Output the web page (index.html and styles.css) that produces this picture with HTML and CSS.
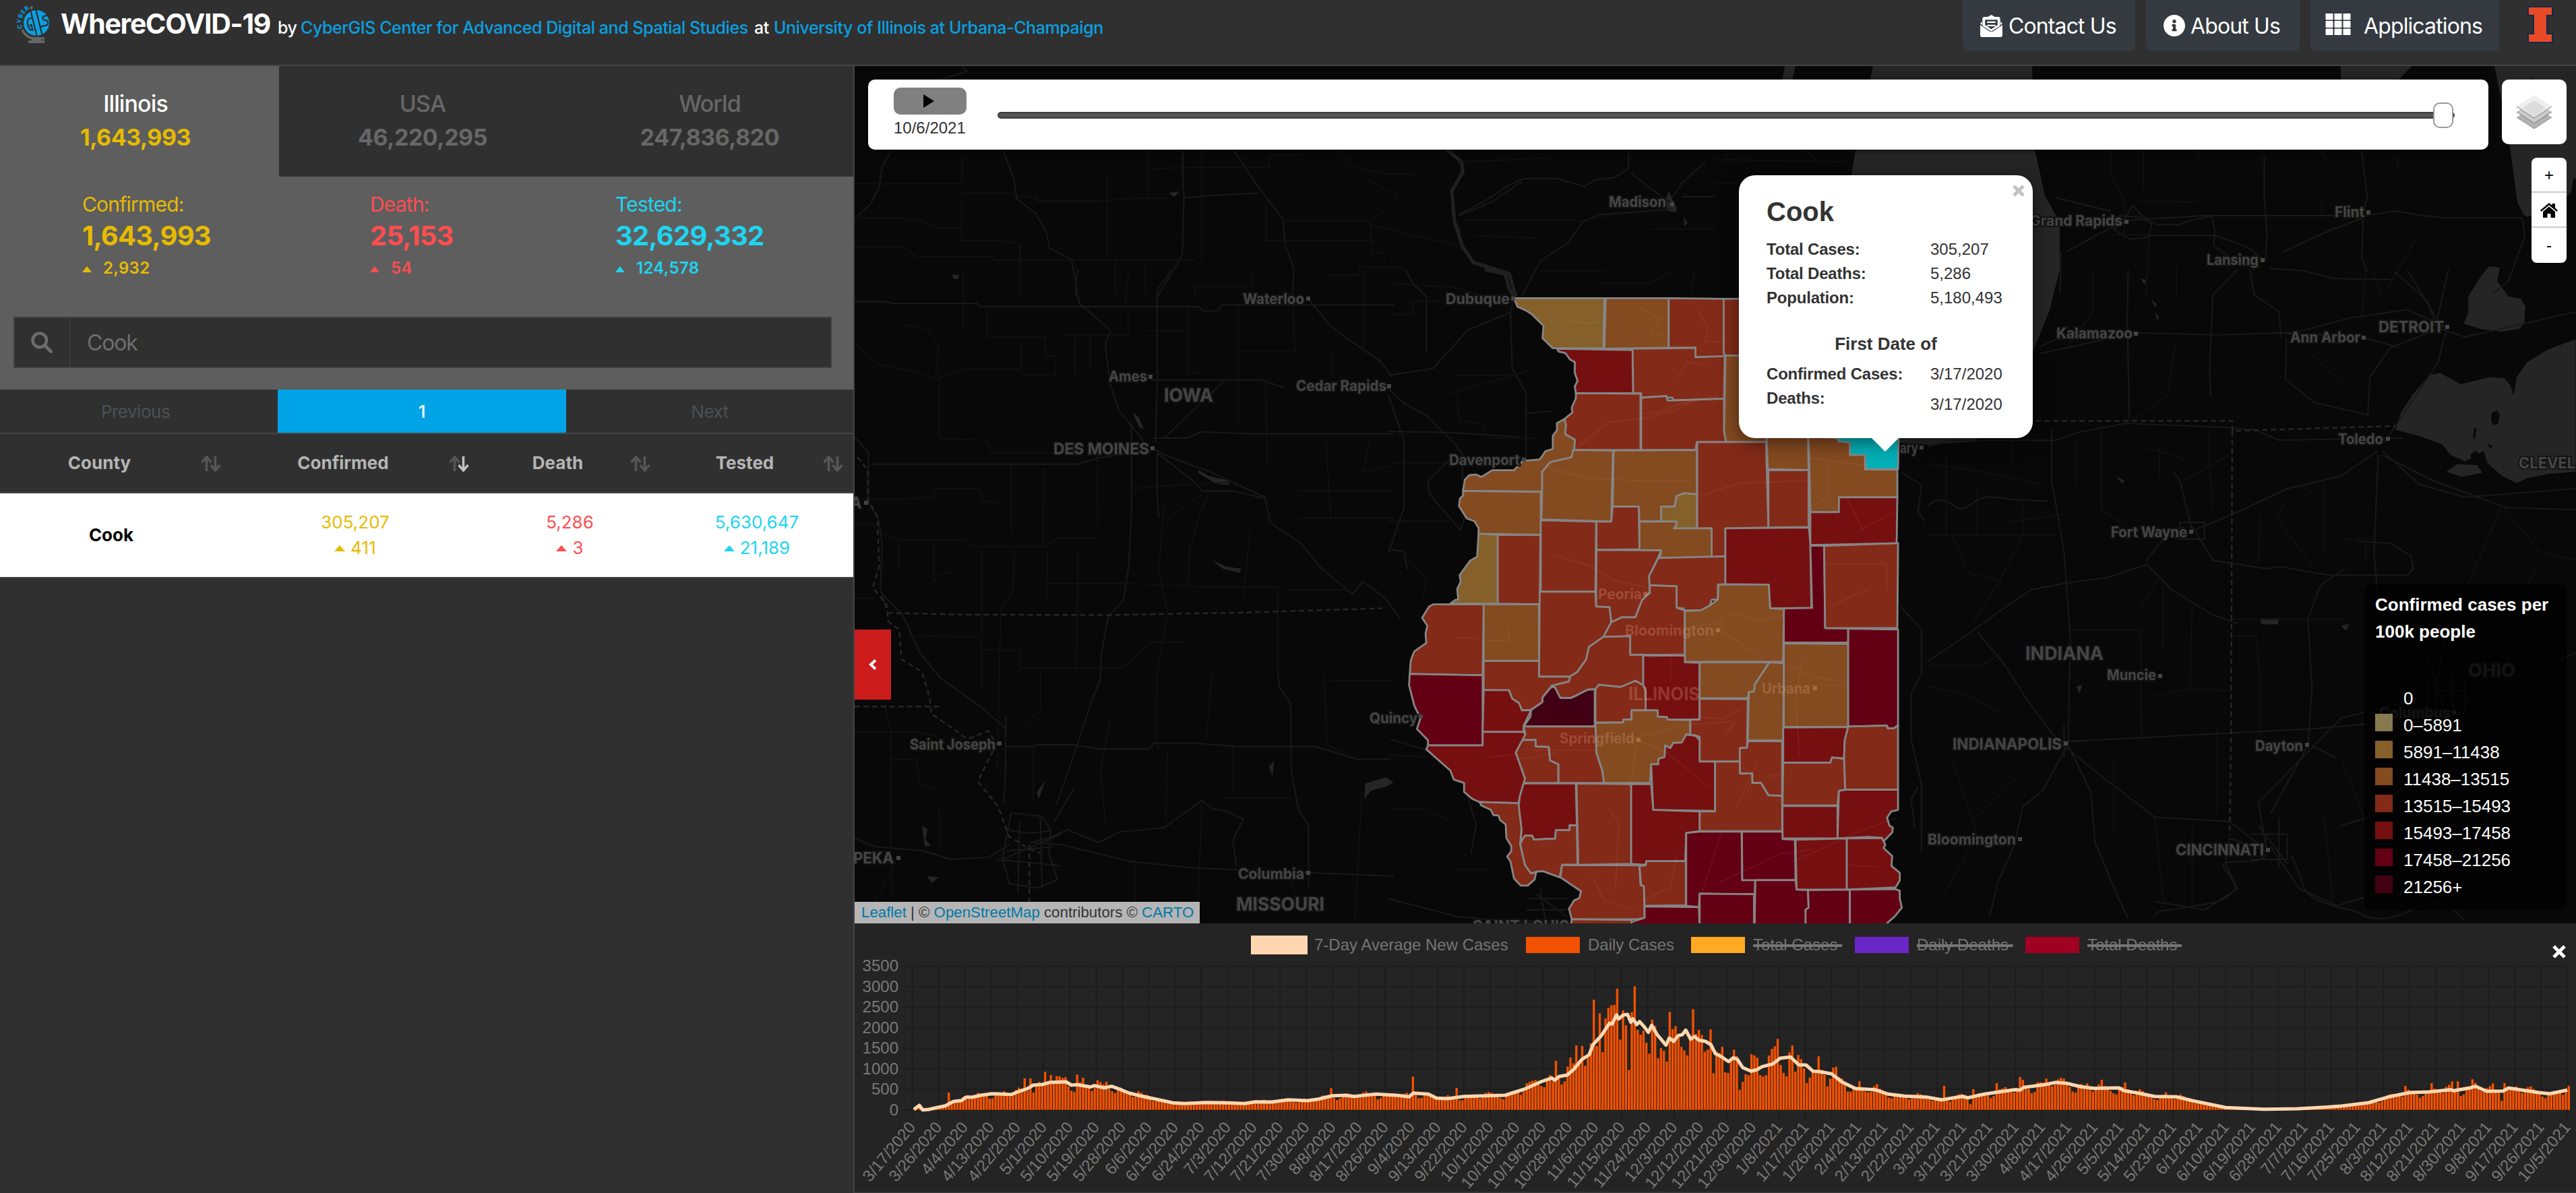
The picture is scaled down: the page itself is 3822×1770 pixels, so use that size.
FILE: index.html
```html
<!DOCTYPE html>
<html lang="en">
<head>
<meta charset="utf-8">
<title>WhereCOVID-19</title>
<link rel="stylesheet" href="styles.css">
</head>
<body>
<header class="topbar">
  <svg class="logo" viewBox="0 0 60 64" width="60" height="64">
    <circle cx="34" cy="34" r="19" fill="#0aa0e2"/>
    <g fill="none" stroke="#303030" stroke-width="2.2" transform="rotate(-14 34 34)">
      <path d="M30 14v40M38 14v40M30 25h-5c-3 1-4 5-4 9s1 8 4 9h1v-8h-3M53 27h-6c-3 0-3 5 0 6 5 1 5 8 0 8h-9"/>
    </g>
    <path id="arc" d="M13.5 42A22.5 22.5 0 0 1 26 12.500" fill="none"/>
    <text class="logo-text"><textPath href="#arc">CYBER</textPath></text>
    <circle cx="26.500" cy="11.500" r="2.200" fill="#666"/>
    <path d="M13 44c4 9 12 14 23 13h10" fill="none" stroke="#666" stroke-width="3.500"/>
    <path d="M27 55h14v5h5v4c-8 3-16 3-24 0v-4h5z" fill="#666"/>
  </svg>
  <h1 class="brand">WhereCOVID-19</h1>
  <p class="byline"><span class="by">by</span><a class="l1">CyberGIS Center for Advanced Digital and Spatial Studies</a><span class="at">at</span><a class="l2">University of Illinois at Urbana-Champaign</a></p>
  <nav class="nav">
    <a class="btn contact"><svg viewBox="0 0 32 32" width="33" height="33" fill="#fff"><path d="M0 14.500 13 23.500c2 1.300 4 1.300 6 0L32 14.500V29a3 3 0 0 1-3 3H3a3 3 0 0 1-3-3z"/><path d="M0 12.500 3.500 9V5.500Q3.500 3 6 3h5l5-3 5 3h5q2.500 0 2.500 2.500V9L32 12.500 29 14.700V7q0-1-1-1H4Q3 6 3 7v7.700z"/><path d="M3.500 4h25v12L16 24 3.500 16z"/><path d="M7 7h18v7.500l-9 6-9-6z" fill="#343a40"/><path d="M10 9.500h12v2.200H10zM10 14.200h12v2.200H10z"/></svg><span>Contact Us</span></a>
    <a class="btn about"><svg viewBox="8 8 496 496" width="32" height="32" fill="#fff"><path d="M256 8C119.043 8 8 119.083 8 256c0 136.997 111.043 248 248 248s248-111.003 248-248C504 119.083 392.957 8 256 8zm0 110c23.196 0 42 18.804 42 42s-18.804 42-42 42-42-18.804-42-42 18.804-42 42-42zm56 254c0 6.627-5.373 12-12 12h-88c-6.627 0-12-5.373-12-12v-24c0-6.627 5.373-12 12-12h12v-64h-12c-6.627 0-12-5.373-12-12v-24c0-6.627 5.373-12 12-12h64c6.627 0 12 5.373 12 12v100h12c6.627 0 12 5.373 12 12v24z"/></svg><span>About Us</span></a>
    <a class="btn apps"><svg viewBox="0 0 38 32" width="38" height="32" fill="#fff"><path d="M1 0h10v9H1zM14 0h10v9H14zM27 0h10v9H27zM1 11.500h10v9H1zM14 11.500h10v9H14zM27 11.500h10v9H27zM1 23h10v9H1zM14 23h10v9H14zM27 23h10v9H27z" stroke="#fff" stroke-linejoin="round"/></svg><span>Applications</span></a>
    <svg class="block-i" viewBox="0 0 40 57" width="40" height="57"><path d="M2 2h36v13h-8v27h8v13H2V42h8V15H2z" fill="#e84a27" stroke="#13294b" stroke-width="2"/></svg>
  </nav>
</header>
<main class="layout">
  <aside class="sidebar">
    <div class="tabs">
      <div class="tab active"><b>Illinois</b><strong>1,643,993</strong></div>
      <div class="tab"><b>USA</b><strong>46,220,295</strong></div>
      <div class="tab"><b>World</b><strong>247,836,820</strong></div>
    </div>
    <div class="panel">
      <div class="stats">
        <div class="stat yellow"><span>Confirmed:</span><strong>1,643,993</strong><em><i></i>2,932</em></div>
        <div class="stat red"><span>Death:</span><strong>25,153</strong><em><i></i>54</em></div>
        <div class="stat cyan"><span>Tested:</span><strong>32,629,332</strong><em><i></i>124,578</em></div>
      </div>
      <div class="search">
        <span class="search-icon"><svg viewBox="0 0 32 32" width="32" height="32" fill="none" stroke="#6c6c6c" stroke-linecap="round"><circle cx="12.800" cy="12.800" r="10.300" stroke-width="4.600"/><path d="M21 21l8.500 8.500" stroke-width="5"/></svg></span>
        <span class="search-text">Cook</span>
      </div>
    </div>
    <div class="pager"><span>Previous</span><span class="current">1</span><span>Next</span></div>
    <div class="row head">
      <div class="cell"><b>County</b><svg class="sort" viewBox="0 0 30 24"><path d="M8.500 23V3M1.500 10l7-8 7 8"/><path d="M21.500 1v20M14.500 14l7 8 7-8"/></svg></div>
      <div class="cell"><b>Confirmed</b><svg class="sort" viewBox="0 0 30 24"><path d="M8.500 23V3M1.500 10l7-8 7 8"/><path class="on" d="M21.500 1v20M14.500 14l7 8 7-8"/></svg></div>
      <div class="cell"><b>Death</b><svg class="sort" viewBox="0 0 30 24"><path d="M8.500 23V3M1.500 10l7-8 7 8"/><path d="M21.500 1v20M14.500 14l7 8 7-8"/></svg></div>
      <div class="cell"><b>Tested</b><svg class="sort" viewBox="0 0 30 24"><path d="M8.500 23V3M1.500 10l7-8 7 8"/><path d="M21.500 1v20M14.500 14l7 8 7-8"/></svg></div>
    </div>
    <div class="row body">
      <div class="cell"><b>Cook</b></div>
      <div class="cell yellow"><span>305,207</span><em><i></i>411</em></div>
      <div class="cell red"><span>5,286</span><em><i></i>3</em></div>
      <div class="cell cyan"><span>5,630,647</span><em><i></i>21,189</em></div>
    </div>
  </aside>
  <section class="content">
    <div class="map">
      <svg class="basemap" viewBox="1268 98 2554 1272" width="2554" height="1272">
        <g class="water">
          <path d="M2779 98H3015L3019 222 3034 290 3056 330V400L3041 460 3019 515 2980 600 2930 655 2860 660 2790 655 2747 400V260L2753 222z"/>
          <path d="M2648 98h16l-6 24h-14zM3473 98h106l-24 24h-82z"/>
          <path d="M3701 98 3722 200 3727 240 3735 300 3744 318 3750 322 3800 300 3815 285 3818 265H3822V98z"/>
          <path d="M3681 410 3693 395 3709 397 3705 417 3722 440 3740 443 3747 455 3745 480 3738 488 3710 492 3680 488 3655 480 3662 465V440z"/>
          <path transform="translate(2860 400) scale(.6133 .625)" d="M1215 250l25-5 50 27 70-17 35 3 15 17 8 25 7-45 25-35 50-30 68-25v315l-68 5-50 10-25 12-35-17-35-30-10-30-25 15-20 10-35-15-20-25-55-20-58-15 13-40 30-45zM1255 480l25-18 50 2 12 18-50 10z"/>
          <path transform="translate(1268 400) scale(.5102 .625)" d="M1000 475l30 15 55 10 5 12-40-4-50-25zM1040 690l40 15 45 5-5 10-50-10zM808 340l18 10 15 28-12-2zM282 12h20v10h-14zM1485 1220l60-15 22 12-20 10-45 10-20 20zM196 1320l16 8-6 25 16 14-18 2zM210 1440l35 2-20 14zM1205 1180l15-15-5 38zM530 1240l25-28-20 45z"/>
          <path transform="translate(2860 400) scale(.6133 .625)" d="M805 828h45l-3 14h-40zM1000 845l20-4-8 16zM515 22l14 2-4 12zM455 490l22 12-6 6zM360 990l15-5-8 22zM540 70l14 12-4 8zM548 100l12 14-4 6z"/>
          <path d="M2476 283l6 14 6 12-2 6-12-2-4-12zM2498 322l6 8-5 6zM1734 286l16-2-8 8z"/>
        </g>
        <path class="island" transform="translate(2860 400) scale(.6133 .625)" d="M1364 340l14-6 6 10-4 22-12 4-5-14zM1322 378l6-4-4 30-5-6zM1354 414l12 4-4 8zM1312 440l14-10 8 8-16 12z"/>
        <g class="roads" transform="translate(1268 0) scale(.8144 .3333)">
          <path class="r1" d="M160 350l45-32-10-24M70 660l-20 80-5 90-15 75-25 60M270 665l20 130 5 90 35 65 20 90 5 65 40 50 8 100v65M690 665l40 150 50 160 5 120 15 100-2 130M598 665v120l2 90-3 260-45 185M600 880l50-10 85-10M1080 665l25 65 5 40-20 70-2 110 15 80 2 70 20 60 65 50 12 100"/>
          <path class="r1 thick" d="M1078 665l28 55 2 45-20 85 5 140 15 110 20 70 65 50 12 100"/>
          <path class="r1" d="M1100 955l45-55 50-80 25-25h60l50 35 20-30 35-10 25-40v-75M1100 960l60-60 55-90M1490 930l-100 20-35 5-30 35-25 90-50 80-35 160M1490 880l15-60 45-100M1568 875h-60M1490 910l-45-80-30-60"/>
          <path class="r0" d="M0 818h195l2-120M0 970h90v12h35l25 32h45V860h100v15h35v20h120l60-12h60M195 860v210h70l35 14v70M0 1100h90l22 42h140v15h370M460 780v375M535 665v210M540 752l50-6h165V690h60M632 665v500M750 890v175M780 983h160v170M745 1070h200v55h20v38M880 665l30 80 60 30h50M940 1000l80 50 80 40M930 790l60 90-50 110M1105 720l90-8 65-10M1110 980h210M1320 985l60-30M1450 1020h118M1130 1050l120 10M1250 1205h118M865 1225h55v-37h80M302 1085v230M475 1160v155M530 1160v155"/>
        </g>
        <g class="roads" transform="translate(2545 0) scale(.8144 .3333)">
          <path class="r1" d="M745 990l-20 30 30 45 35-10 5-60-25-30-35-5M745 980l15-65 20 50 25 35h40l30-25 30-12 5 60-2 70 35 60 25 30 25 5M640 1120l60-80 50-60 140-20h290l60-20 50 20 40 10h140M1180 960l-2 190 10 60M1180 940l8-60-10-200-25-40M1000 700v190l5 150-3 120M1000 1160l-30-60-60-52H790M1010 1195l60 10 60 35 100 5M1035 1120l80-90 65-60M630 1120l-2 190M620 880l100 60M1470 970l5 80-30 200-30 60"/>
          <path class="r0" d="M780 665v180M720 665v110l25 120v180M880 665v60M995 665v90M1115 720l-15-55M770 895l110 5M715 1045h75M0 710l240 10M20 665v60M160 665l30 60M790 1060l-5 250M840 1180v140M1105 880v70M1200 1220l15 100M1240 700l5 50M1330 665v-60M1480 400l10-60M0 815h45M1280 1050l-60 250"/>
        </g>
        <g class="roads" transform="translate(1268 400) scale(.5102 .625)">
          <path class="r1" d="M0 76h90l20 4h245l12 8h635l10 10h42l14-14h500M650 0l-8 30 12 50 70 50 20 15-15 30 5 40 10 60 25 60 60 60 30 40M880 260V50l40-50M880 260l-5 150M860 262h320l70 18M868 425l35 15 130 40 160 60 15 60 90 50 60 60 90 60 30-30 65 40 45 50M868 400h100l40-15 150 5h410M805 365v210l-8 130-15 80-45 40-20 90-2 55-28 60-40 100-60 140M880 430v110l5 50M0 398l40 35v120l30 40 10 60-5 100 15 50M48 462h600l60-15 90-10M880 435l110 70 20 20h90l90 18M1320 70l60 60 45 30 100 55 40 40M900 400l180-140M1230 950l5 40 33 40 2 160 20 90 30 40v150M440 1132h75l20-4h100l80 10h140l15-14h120l120 8h230l120 30h100M0 1350l60 20 140 10 80 20 110-5 60-30M510 1360l90 5 200 40 180 15 588 20M440 1060l-2 150-5 60M80 770l60 50 50 90 60 60 60 35 60 35 70 50M580 1310l60-80"/>
          <path class="r1" d="M455 1290l90 8 25 30-5 60 25 60-60 20-80-10-20-60zM440 1330l70 8 60-6M440 1380l140-10M480 1310l-5 170M540 1300l5 170M410 1400l190 15M600 1340l-170 60M510 1360l50-10 60-20 90 30 60-25 130-10 60-35 50-30 30 20 40 5 50 20-30 50 10 60"/>
          <path class="r0" d="M0 175l70 50 90 15 75 20M235 260l10-80-35-40-75-10M235 260l90-25h160l5 15h95V205h-30v-45h-170V85M315 0v142M245 240v160M485 165v74M600 155h195V90M640 160v90M685 160v80M797 0l-12 100M850 145h120M970 80v165h50M1115 80v115h165l-5-110M1115 195v170M1155 0v40H990v30M250 402l130 3 20 30h200M0 545h140l90-5 3-20h130l10 30 60 5M455 462v160M550 470l-2 190M705 400l2 210M805 520l120-8 190-8M1195 260l5 200M1390 190v65M1370 400l15 190M1480 0v200M0 605h60M70 620l60 22h190l20 15h220l30-20h110M128 640v75M285 720h-30l-25 20V640M370 665v330M465 665l-5 100-35 40-10 380M560 665v115M550 745h250l200 8h240M650 665l-5 280M900 550l-15 160 15 70 10 30-30 150-5 120 8 60M975 650l-5 100M1030 530l-30 60-20 60M1150 620l-20 160M1230 760v190M1260 760h180M1293 590h275M1290 525h280M0 780h60M150 870l210 2 10 30 110 3M0 1098h180l60 10M90 850v200l15 40v280l5 120M180 1165l10 60 60 10M105 1163h75M480 905v40h300l80-60h100M540 945v100l-60 50M640 945h60M1040 955l-20 180M1365 960l10 170 60 20M1380 975h190M745 1060l-30 130 15 130M910 1140l-5 170M1100 1130v110M1010 1260l-10 220-5 60M1060 1255h230M815 1400v150M1475 1240l-20 310M245 1270l5 110M520 1130v130M120 1400l-20 40-60 90M1250 1430l60 90M900 600l130-80M1500 390l-20 90 88-15"/>
          <path class="border" d="M0 1037h255M95 815l40 1 200 3 400 1 400-6 400-10M508 1365v190"/>
          <path class="border" d="M8 445l30 30v70l28 40 5 120-18 50 40 40 5 40 32 20 6 70 60 30 22 60 5 40 55 30 50 30 60-20 25 30-55 90 60 60 30 70 60 30 30 10"/>
        </g>
        <g class="roads" transform="translate(2860 400) scale(.6133 .625)">
          <path class="r1" d="M270 200l230-50 200 5 170-5 180 10 90 25M270 185l40-20 180-10M485 0l-2 120 5 230M750 0l-60 60-8 180 3 60M780 0l10 60 60 40 5 60M868 160l-2 100M865 260l70 55 130 30M1065 345l5-90 50-70 130-50M1240 140l60 20 268-60M1255 140l-20 80-130 190M1250 135l-90-40-140 20-150 40M1230 130l30-130M1240 130l-80-130M1230 135l-20-60-80-70M0 420l60-15h250l60-20 110-20 250 10 60 5 60 25 300-5M1090 440l-10 230 10 120M1090 430l-90 60-130 30-130 60-100 40M1100 430l90 80 110 30 268-20M1100 440l120 60 180 65 168 5M640 610l50 80 130 20 30-5 120 20h190l15-15-5-30-50-30-80-5M640 620l-30-120-15-20M300 380v120l30 170 15 200-5 260M530 700l-90 30-110 15-80 15-60 40-70 50-120 80M530 690l40-50 50-30M530 700l60 60 100 60 60 20M120 860l60 70 60 90 60 80 30 30M340 1125l-60 110-50 40-20 90-40 90-20 80M340 1130l55 110 10 120 60 140 20 40M340 1120l200-10 190-10 200-10 240-20M330 1130l100 80 120 90 180 10 80 60M820 1375l-20-110 90-90 110-110 240-60M830 1370l70 100 90 40 100-30 80 40M820 1380l-90-30-10 60 30 60-80 50-120-20M920 1130l10-140-10-160 30-80 60-40M920 1130l-90 160M930 1130l60 30M1250 1060l80-60 238-90M1250 1050l-60-200-130-70M1260 1060l60 160 60 180 80 80M1250 1060l-90 150-60 80-100 30M1230 1000l20-120 50-80"/>
          <path class="r1" d="M1210 980h90v70h-90zM1195 1050h120M1230 960v130M1270 950v150M1225 1000h80M780 1340h90v60h-90M800 1320l70 90M850 1300v120M300 1120h70M330 1080v80M610 600h60v40h-60z"/>
          <path class="r0" d="M0 460l130 20 150 30M0 630h310M45 440v200M120 515v120M230 545v90l-60 110-60 90M190 600l150-20M420 380v190l60 40M360 400v110M560 420l2 80M680 380v60l10 130M735 1000l-100-5-100 20M0 990l100 20 70 40M0 940h130l50-30M345 855h170l3 270M570 750l-2 160M640 800l-5 200M560 730l-50 80M735 870h60l10 110v130M805 580l-5 120M960 510v160M865 550l-20 40 90 120M910 540l20-15M735 830h270M1390 560l-80 180-20 60M1390 560l90 110 88 20M1480 700l-30 50M60 630l40 90 80 20M200 360l5 100M400 0v100l-60 80M600 170l-20 130-90 60M1060 0l-10 120M930 200l70 70M1000 640h60v50M60 1160l60 180-90 160M220 1200l-120 120M450 1160v180M550 1300l20 200M640 1320v200M700 1090v200M1000 1160l60 150M1130 1180l60 180M960 1300l20 200M620 500l110-60M520 420l100 30"/>
          <path class="border" d="M240 359h497v24l395-12M737 383l-3 720-3 240"/>
          <path class="r1" d="M0 560c60-40 60 30 100 0s60-20 100-15l90 5M820 1385c-10 40-130 0-100 40s30 40 10 60-60 20-110 30-60 0-70 20M880 1390c30 60 20 90 70 110s90 20 100 30 60 20 110-5 60-20 80-20 40 20 60 40"/>
        </g>
        <g class="roads" transform="translate(2060 400) scale(.5102 .3333)">
          <path class="r1 thick" d="M280 0l60 20 10 60 15 45"/>
          <path class="r1" d="M0 470l130-30 100-170 125-80 10-60M355 190l5 250 40 110v300M0 530l50 70 60 50 80 120 25 50v120M0 720l180 5 200 20M0 560l45 200v300l-45 200M400 640l80-10M120 1000l90 160 20-100M120 1000l-5-60 80-120M0 1245l45 10 10 80M50 0l20 60 40 60v250M1490 900l60 60-10 120 20 40M1490 1500l60 100v200l-30 90v200l30 200v300M1540 2300l-20 60 10 120M0 2800l200 80 300 40 30 100M240 2600l15-130-40-200-80-120-130-60M410 2800h110M430 2780l90 100M400 2850h120M440 2750l20 180M380 2900h140"/>
          <path class="r0" d="M0 60l200 20 80 40M0 200h70v-60h90M180 550l230-100-60 20h-160M200 560l5 110 75 20v60h150M0 860h190M0 1120h180M40 1250l70 130-10 100M0 2160l110 10M0 2400h100l90 60M200 2670h100M450 200l60 10 80-40M620 60h140l60-50M890 0l-10 100"/>
        </g>
        <g id="counties" transform="translate(2060 400) scale(.5102 .3333)"></g>
        <g class="cover" transform="translate(2060 400) scale(.5102 .3333)">
          <path d="M530 230l60 10 30-10M730 170l60 50-30 60 50 20M900 180l30 80-10 60h60M840 480l30-70 60 20M550 790l90-110 120-20 80-60 120-40M740 640l90-10 60-50M460 880l120 50 160 10h140M900 1010l120-60 200-10M1280 860v150M1230 840l150 30 90-30M1380 1160l-50-150M1240 1000l60 70M1370 1160l100-80M480 1270l110 50 60 60 110 40M930 1590l60-60 90 30 70-20M870 1590l100-20M940 1560l40 60 90 90M760 1730l110-30M890 1990l80 10 50-40M1160 1760l80 50 90 30M1205 1730l-20 180 10 260M1210 1850h120M820 1700v140M720 2090l90 60 120 150M720 2100l-10 160-20 60M700 2090l160-60 140-20M980 2070l30-60M490 2150l-60 20-60 10M420 2140h180M1060 2270l-20 70M1100 2260l50-20M1170 2640l200-140 110-60M960 2730l180-130 100-20M970 2500l-60 280M1010 2400l60-200M640 2400l30 60-10 300M840 2600l-20 150-80 60M590 2700l40 110 90 40M1340 2650l80 10M1280 1500l120-80M1270 1310h180v120M200 1640h60M350 1590v60h-60M280 2170l90-10"/>
        </g>
        <g id="places"></g>
      </svg>
      <div class="timeline">
        <div class="play-col"><button class="play"><svg viewBox="0 0 16 20" width="16" height="20"><path d="M0 0l16 10L0 20z"/></svg></button><span>10/6/2021</span></div>
        <div class="track"><div class="thumb"></div></div>
      </div>
      <div class="layers"><svg viewBox="0 0 52 50" width="52" height="50"><path d="M26 16l26 17-26 17L0 33z" fill="#b3b3b3"/><path d="M0 33l26 17 26-17" fill="none" stroke="#8a8a8a"/><path d="M26 8l26 17-26 17L0 25z" fill="#c9c9c9"/><path d="M0 25l26 17 26-17" fill="none" stroke="#777"/><path d="M26 0l26 17-26 17L0 17z" fill="#efefef"/><path d="M26 8l17 11-17 14L9 19z" fill="#dcdcdc"/><path d="M0 17l26 17 26-17" fill="none" stroke="#777"/></svg></div>
      <div class="zoom"><span>+</span><span><svg viewBox="0 0 26 22" width="26" height="22"><path d="M0 11 13 0l4.500 3.800V1H22v6.500L26 11l-1.500 2L13 3.500 1.500 13z"/><path d="M13 5.500 22 13v9h-6.500v-6h-5v6H4v-9z"/></svg></span><span>-</span></div>
      <div class="popup">
        <svg class="popup-x" viewBox="0 0 20 20" width="20" height="20"><path d="M3 3l14 14M17 3L3 17" stroke="#c3c3c3" stroke-width="5"/></svg>
        <h2>Cook</h2>
        <dl><dt>Total Cases:</dt><dd>305,207</dd><dt>Total Deaths:</dt><dd>5,286</dd><dt>Population:</dt><dd>5,180,493</dd></dl>
        <h3>First Date of</h3>
        <dl><dt>Confirmed Cases:</dt><dd>3/17/2020</dd><dt>Deaths:</dt><dd class="low">3/17/2020</dd></dl>
      </div>
      <div class="legend">
        <h4>Confirmed cases per 100k people</h4>
        <ul>
          <li><i></i>0</li>
          <li><i class="c0"></i>0–5891</li>
          <li><i class="c1"></i>5891–11438</li>
          <li><i class="c2"></i>11438–13515</li>
          <li><i class="c3"></i>13515–15493</li>
          <li><i class="c4"></i>15493–17458</li>
          <li><i class="c5"></i>17458–21256</li>
          <li><i class="c6"></i>21256+</li>
        </ul>
      </div>
      <div class="collapse"><svg viewBox="0 0 12 18" width="12" height="18"><path d="M10 2.500L3 9l7 6.500" fill="none" stroke="#fff" stroke-width="4"/></svg></div>
      <div class="attribution"><a>Leaflet</a> | © <a>OpenStreetMap</a> contributors © <a>CARTO</a></div>
    </div>
    <div class="chart">
      <div class="keys">
        <span class="key avg"><i></i>7-Day Average New Cases</span>
        <span class="key daily"><i></i>Daily Cases</span>
        <span class="key total"><i></i><s>Total Cases&nbsp;</s></span>
        <span class="key deaths"><i></i><s>Daily Deaths&nbsp;</s></span>
        <span class="key tdeaths"><i></i><s>Total Deaths&nbsp;</s></span>
      </div>
      <svg class="chart-x" viewBox="0 0 22 22" width="22" height="22"><path d="M3 3l16 16M19 3L3 19" stroke="#fff" stroke-width="5"/></svg>
      <svg id="plot" viewBox="1268 1370 2554 400" width="2554" height="400"></svg>
    </div>
  </section>
</main>
<script src="app.js"></script>
</body>
</html>
```
FILE: styles.css
```css
* { box-sizing: border-box; margin: 0; padding: 0; }
body { width: 3822px; height: 1770px; overflow: hidden; background: #303030; color: #fff; font-family: Inter, "Liberation Sans", sans-serif; display: flex; flex-direction: column; }
i, em { font-style: normal; }
.yellow { color: #e6bb00; }
.red { color: #ff4d50; }
.cyan { color: #1ed5f0; }

.topbar { height: 98px; border-bottom: 2px solid #444; display: flex; align-items: flex-start; padding-left: 20px; }
.logo { flex: none; }
.logo-text { font-size: 9px; font-weight: 700; fill: #0aa0e2; letter-spacing: .6px; }
.brand { font-size: 41px; font-weight: 700; line-height: 70px; margin-left: 10px; width: 322px; white-space: nowrap; letter-spacing: -1.3px; }
.byline { display: flex; font-size: 25px; font-weight: 500; line-height: 82px; white-space: nowrap; letter-spacing: -.42px; }
.byline a { color: #0aa0e2; }
.by { width: 34px; }
.l1 { width: 673px; }
.at { width: 29px; }
.nav { margin-left: auto; display: flex; gap: 16px; padding-right: 33px; }
.btn { height: 76px; background: #343a40; border-radius: 0 0 8px 8px; display: flex; align-items: flex-start; font-size: 32px; line-height: 77px; letter-spacing: -.88px; white-space: nowrap; }
.btn svg { margin-top: 22px; flex: none; }
.btn.apps svg { margin-top: 20px; }
.contact { width: 256px; padding-left: 26px; gap: 9px; }
.about { width: 228px; padding-left: 26px; gap: 8px; }
.apps { width: 280px; padding-left: 22px; gap: 19px; }
.block-i { margin: 8px 0 0 25px; }

.layout { flex: 1; display: flex; min-height: 0; }
.sidebar { width: 1268px; flex: none; border-right: 2px solid #444; overflow: hidden; }
.tabs { display: flex; height: 164px; margin-left: -12px; }
.tab { width: 426px; flex: none; padding-top: 31px; display: flex; flex-direction: column; align-items: center; font-size: 34px; line-height: 50px; color: #676767; }
.tab b { font-weight: 500; letter-spacing: -.9px; }
.tab strong { letter-spacing: -.5px; }
.tab.active { background: #5e5e5e; color: #fff; }
.tab.active strong { color: #e6bb00; }
.panel { height: 316px; background: #5e5e5e; }
.stats { height: 208px; display: grid; grid-template-columns: 427px 364px 1fr; padding: 25px 0 0 122px; }
.stat { display: flex; flex-direction: column; }
.stat span { font-size: 30px; line-height: 32px; height: 38px; letter-spacing: -.8px; }
.stat strong { font-size: 40px; line-height: 50px; height: 53px; letter-spacing: -.8px; }
.stat em { font-size: 24px; font-weight: 600; line-height: 40px; display: flex; align-items: center; letter-spacing: .3px; }
.stat em i { border: 7.500px solid transparent; border-bottom: 9px solid; border-top: 0; margin-right: 17px; margin-top: 2px; }
.search { margin-left: 20px; width: 1214px; height: 76px; border: 2px solid #3f3f3f; background: #303030; display: flex; align-items: center; }
.search-icon { width: 82px; height: 72px; border-right: 1px solid #444; padding: 20px 0 0 24px; }
.search-text { font-size: 32px; letter-spacing: -1.2px; color: #6f6f6f; padding-left: 25px; }
.pager { height: 66px; border-bottom: 2px solid #444; display: flex; margin-left: -12px; font-size: 26px; letter-spacing: -.5px; line-height: 66px; color: #4b5056; text-align: center; }
.pager span { width: 426px; height: 64px; flex: none; }
.pager .current { background: #00a3e6; color: #fff; font-weight: 500; margin-left: -2px; width: 428px; }
.row { display: grid; grid-template-columns: 330px 368px 269px 286px; font-size: 26px; }
.head { height: 88px; border-bottom: 2px solid #444; line-height: 86px; color: #b5b5b5; }
.head .cell { position: relative; text-align: center; padding-right: 10px; }
.head .cell:first-child { padding-right: 35px; }
.sort { position: absolute; right: 2px; top: 32px; width: 30px; height: 24px; fill: none; stroke: #565656; stroke-width: 3.500; }
.sort .on { stroke: #c2c2c2; }
.body { width: 1266px; height: 126px; border-bottom: 2px solid #3f4244; background: #fff; line-height: 38px; }
.body .cell { display: flex; flex-direction: column; align-items: center; justify-content: center; padding-left: 26px; }
.body .cell:first-child { padding-left: 0; color: #000; }
.body em { display: flex; align-items: center; }
.body em i { border: 8px solid transparent; border-bottom: 9px solid; border-top: 0; margin-right: 8px; }

.content { flex: 1; display: flex; flex-direction: column; }
.map { position: relative; height: 1272px; background: #080808; overflow: hidden; font-family: "Liberation Sans", sans-serif; }
.basemap { display: block; }
.water { fill: #252525; }
.island { fill: #080808; }
.roads path, .cover path { fill: none; vector-effect: non-scaling-stroke; stroke-linejoin: round; }
.r0 { stroke: #121212; stroke-width: 1.500; }
.r1 { stroke: #191919; stroke-width: 2; }
.thick { stroke: #202020; stroke-width: 5; }
.border { stroke: #262626; stroke-width: 2.500; stroke-dasharray: 8 5; }
.cover path { stroke: rgba(255, 170, 150, .08); stroke-width: 2; }
#counties path { stroke: #868686; stroke-width: 2.800; vector-effect: non-scaling-stroke; stroke-linejoin: round; }
.place { font-family: Inter, sans-serif; font-weight: 700; fill: #454545; stroke: #121212; stroke-width: 4; paint-order: stroke; }
.place.over { fill: rgba(255, 190, 160, .24); stroke: none; }
.dot { fill: #454545; }
.dot.over { fill: rgba(255, 190, 160, .3); }

.timeline { position: absolute; left: 20px; top: 20px; width: 2404px; height: 104px; border-radius: 10px; background: #fff; box-shadow: 0 2px 10px rgba(0, 0, 0, .6); display: flex; padding: 12px 50px 0 38px; }
.play-col { width: 108px; margin-right: 46px; color: #333; font-size: 24px; line-height: 40px; }
.play { display: flex; align-items: center; justify-content: center; width: 108px; height: 40px; border: 0; border-radius: 10px; background: #808080; padding-right: 4px; }
.track { flex: 1; height: 10px; margin-top: 36px; border: 2px solid #3a3a3a; background: #555; border-radius: 5px; display: flex; justify-content: flex-end; align-items: center; }
.thumb { flex: none; width: 30px; height: 38px; border: 2px solid #999; border-radius: 10px; background: #fff; }
.layers { position: absolute; left: 2444px; top: 20px; width: 96px; height: 96px; border-radius: 10px; background: #fff; display: flex; align-items: center; justify-content: center; }
.zoom { position: absolute; left: 2488px; top: 136px; width: 52px; height: 156px; border-radius: 8px; background: #fff; color: #000; font-size: 24px; text-align: center; line-height: 52px; overflow: hidden; display: flex; flex-direction: column; }
.zoom span { height: 52px; border-bottom: 2px solid #ccc; }
.zoom span:last-child { border: 0; }
.zoom svg { display: block; margin: 15px auto 0; }
.popup { position: absolute; left: 1312px; top: 162px; width: 436px; height: 390px; border-radius: 24px; background: #fff; color: #333; box-shadow: 0 6px 28px rgba(0, 0, 0, .5); padding: 30px 0 0 41px; font-size: 24px; line-height: 36px; }
.popup::after { content: ""; position: absolute; left: 196px; top: 389px; border: 21px solid transparent; border-top: 21px solid #fff; border-bottom: 0; }
.popup-x { position: absolute; left: 405px; top: 13px; }
.popup h2 { font-size: 40px; line-height: 48px; height: 62px; }
.popup dl { display: grid; grid-template-columns: 243px 1fr; grid-auto-rows: 36px; }
.popup dt { font-weight: 700; letter-spacing: -.2px; }
.popup h3 { font-size: 26px; text-align: center; width: 354px; line-height: 36px; margin: 32px 0 9px; }
.popup .low { padding-top: 9px; }
.legend { position: absolute; left: 2240px; top: 768px; width: 300px; height: 484px; border-radius: 10px; background: rgba(0, 0, 0, .72); padding: 11px 0 0 16px; font-size: 26px; line-height: 40px; }
.legend h4 { font-size: 26px; margin-bottom: 59px; }
.legend li { display: flex; height: 40px; align-items: flex-start; }
.legend i { width: 26px; height: 26px; margin: 3px 16px 0 0; }
.c0 { background: #857a4e; } .c1 { background: #85602b; } .c2 { background: #844a20; } .c3 { background: #832a18; } .c4 { background: #760f10; } .c5 { background: #640013; } .c6 { background: #420015; }
.collapse { position: absolute; left: 0; top: 836px; width: 54px; height: 104px; background: #cc1c1c; display: flex; align-items: center; justify-content: center; }
.attribution { position: absolute; left: 0; bottom: 0; width: 512px; height: 32px; background: #b5b5b5; color: #333; font-size: 22.270px; line-height: 32px; padding-left: 10px; white-space: nowrap; }
.attribution a { color: #0078a8; }

.chart { position: relative; height: 400px; background: #242424; border-bottom: 2px solid #363636; font-family: "Liberation Sans", sans-serif; }
.keys { height: 63px; padding-left: 588px; display: flex; align-items: center; color: #757575; font-size: 24px; line-height: 64px; white-space: nowrap; }
.key { display: flex; align-items: center; }
.key i { width: 80px; height: 24px; margin-right: 12px; }
.avg { width: 408px; } .avg i { width: 84px; height: 28px; background: #fed7b0; margin-right: 10px; }
.daily { width: 245px; } .daily i { background: #f25100; }
.total { width: 243px; } .total i { background: #ffaa22; }
.deaths { width: 253px; } .deaths i { background: #6b26c8; }
.tdeaths i { background: #a00022; }
.key s { text-decoration-thickness: 4px; }
.chart-x { position: absolute; left: 2518px; top: 31px; }
#plot { position: absolute; left: 0; top: 0; }
.grid { stroke: #1d1d1d; stroke-width: 2; fill: none; }
.bars { stroke: #f25100; stroke-width: 3.400; fill: none; }
.avgline { stroke: #fed7b0; stroke-width: 5; fill: none; stroke-linejoin: round; }
.axis { fill: #787878; font-size: 24px; text-anchor: end; }
```
FILE: app.js
```js
const NS = 'http://www.w3.org/2000/svg';
function add(parent, tag, attrs, text) {
  const el = document.createElementNS(NS, tag);
  for (const k in attrs) el.setAttribute(k, attrs[k]);
  if (text) el.textContent = text;
  parent.appendChild(el);
  return el;
}

const FILL = { A: '#85602b', B: '#844a20', C: '#832a18', D: '#760f10', E: '#640013', F: '#420015', X: '#00b0b8' };
const counties = `
A 365,127 628,127 625,350 478,350 448,305 451,250 418,200 400,182 375,165
B 632,127 815,127 815,348 628,352
C 815,127 975,130 975,370 980,388 893,390 893,348 815,348
C 975,130 1060,130 1060,383 980,383 975,370
D 490,352 710,358 712,550 545,550 542,520 550,495 542,460 542,412 528,400 515,372 495,365
C 710,352 893,348 893,390 978,385 976,575 828,582 826,570 812,570 808,563 735,570 735,550 712,550
C 545,550 733,552 733,803 540,803 542,757 514,733 516,690 512,665 535,636 533,615 545,573
C 735,570 808,563 812,582 828,582 976,575 976,720 982,768 897,768 893,803 735,803
B 980,383 1100,383 1100,768 982,768 976,720
C 898,768 1098,768 1105,1148 980,1152 980,1275 940,1280 940,1152 898,1152
B 1100,740 1220,740 1222,892 1103,888
C 1105,893 1222,893 1222,1146 1105,1148
B 1222,740 1305,750 1310,765 1342,770 1342,825 1386,825 1386,890 1480,890 1480,1014 1310,1014 1310,1080 1227,1080
D 1310,1014 1480,1014 1478,1218 1227,1226 1227,1080 1310,1080
B 490,683 512,665 516,690 514,733 542,757 540,803 533,835 470,858 447,900 447,988 217,985 222,935 235,915 255,912 270,923 302,893 365,893 390,852 440,845 457,808 478,798 478,740 490,715
B 217,985 443,990 443,1180 262,1176 262,1150 250,1120 228,1108 205,1052 208,1020 217,1005
B 447,900 470,858 533,835 537,803 653,805 648,1122 445,1112 447,988
B 655,805 897,803 897,1000 860,995 838,1008 832,1055 793,1055 793,1120 730,1120 728,1055 652,1055
A 897,1000 860,995 838,1008 832,1055 793,1055 793,1120 838,1122 838,1135 830,1152 897,1152
C 652,1055 728,1055 730,1245 605,1248 605,1122 648,1122
B 730,1122 838,1122 838,1135 830,1152 940,1152 940,1282 790,1282 793,1250 730,1248
A 262,1176 318,1180 318,1487 180,1487 195,1470 203,1468 200,1420 210,1390 207,1360 238,1295 258,1278
C 318,1180 442,1182 440,1490 318,1487
C 443,1116 604,1122 602,1434 443,1434
C 605,1248 793,1250 782,1290 758,1365 760,1435 738,1470 718,1548 678,1548 648,1570 643,1503 604,1500
C 785,1284 980,1276 980,1400 958,1402 958,1468 940,1470 935,1495 908,1517 860,1517 858,1508 838,1505 838,1410 760,1405 758,1365
D 980,1152 1223,1148 1227,1226 1230,1506 1110,1508 1106,1402 980,1400
E 1227,1228 1267,1230 1270,1596 1337,1598 1337,1660 1150,1660 1150,1508 1232,1506
C 1267,1230 1482,1218 1480,1596 1270,1596
C 130,1490 277,1490 274,1806 62,1800 65,1740 75,1700 110,1662 108,1620 113,1585 98,1550 118,1500
B 277,1490 438,1490 438,1742 277,1742
C 440,1434 602,1434 604,1500 643,1503 648,1570 632,1630 583,1680 575,1735 550,1790 528,1812 438,1812
C 760,1405 838,1410 838,1505 862,1517 862,1715 703,1715 703,1632 625,1635 648,1570 678,1548 718,1548 738,1470 760,1440
B 862,1520 908,1517 935,1495 958,1468 960,1402 1106,1402 1110,1508 1150,1510 1148,1746 862,1746
C 625,1635 703,1632 703,1715 741,1715 741,1850 718,1830 705,1850 675,1858 612,1848 602,1868 580,1870 548,1895 530,1907 500,1907 485,1862 475,1852 525,1833 528,1812 550,1790 575,1735 583,1680
D 741,1718 862,1718 862,1748 905,1750 905,2003 812,2003 810,1992 783,1990 783,1962 748,1962 748,1875 741,1850
C 602,1868 612,1848 675,1858 718,1830 741,1850 748,1875 748,1962 707,1962 707,2003 683,2005 683,2016 602,2016
B 905,1748 1108,1748 1066,1845 1063,1878 1048,1880 1045,1908 905,1908
B 1108,1748 1150,1752 1148,2096 1045,2096 1048,1880 1063,1878 1066,1845
B 1150,1664 1337,1666 1337,2036 1150,2036
E 1337,1598 1482,1602 1482,2028 1470,2042 1452,2042 1450,2030 1337,2034
E 62,1800 274,1806 274,2118 115,2118 115,2095 83,2045 93,1997 75,1940 60,1850
C 277,1742 438,1742 438,1812 528,1812 525,1833 475,1852 448,1905 448,1925 415,1960 388,1962 380,1930 360,1910 352,1875 277,1872
D 277,1872 350,1872 360,1910 380,1930 388,1962 415,1962 393,2030 393,2058 274,2058
F 475,1855 485,1862 500,1907 530,1907 548,1895 580,1870 600,1868 600,2034 393,2034 413,1990 415,1960 448,1925 448,1905
C 393,2034 602,2034 605,2150 622,2230 627,2285 494,2285 494,2202 470,2185 466,2125 428,2123 428,2094 388,2094 398,2065
B 602,2018 683,2016 683,2003 707,2003 707,1962 783,1962 783,1990 810,1992 812,2003 878,2005 878,2068 866,2070 853,2105 828,2107 820,2130 805,2118 803,2170 785,2178 785,2202 764,2202 761,2285 627,2285 622,2230 605,2150
C 388,2094 428,2094 428,2123 466,2125 470,2185 494,2202 494,2285 393,2285 397,2265 370,2150
D 115,2118 274,2118 274,2058 393,2058 398,2070 370,2150 397,2265 378,2375 265,2370 243,2355 220,2325 220,2285 190,2270 180,2230 110,2135
C 905,1910 1045,1912 1043,2128 1022,2130 1022,2190 905,2190 905,2080 890,2072 878,2072 878,2003 905,2003
D 764,2202 785,2202 785,2178 803,2170 805,2118 820,2130 828,2107 853,2105 866,2070 893,2075 905,2095 905,2190 950,2190 950,2410 770,2405
C 1022,2130 1043,2128 1045,2098 1145,2100 1145,2343 1105,2340 1090,2300 1083,2285 1058,2285 1058,2243 1022,2243
C 950,2190 1022,2190 1022,2243 1058,2243 1058,2285 1083,2285 1105,2340 1145,2343 1145,2500 905,2500 905,2412 950,2412
D 1148,2038 1337,2036 1327,2095 1325,2176 1290,2172 1285,2195 1148,2195
C 1337,2034 1450,2030 1452,2042 1470,2042 1482,2028 1482,2315 1328,2315 1325,2176 1327,2095
C 1148,2195 1285,2195 1290,2172 1325,2178 1328,2315 1310,2320 1306,2385 1146,2385
D 1146,2388 1306,2388 1306,2532 1146,2532
D 1310,2320 1330,2315 1482,2315 1482,2405 1462,2412 1450,2440 1457,2475 1467,2485 1465,2505 1440,2545 1435,2530 1395,2525 1306,2532
D 393,2287 545,2287 548,2475 527,2473 527,2495 487,2495 485,2533 423,2537 418,2520 397,2520 385,2555 387,2490 378,2400 382,2345
C 265,2370 378,2375 387,2490 383,2555 397,2650 415,2688 430,2680 425,2715 405,2742 385,2742 365,2710 355,2635 345,2612 357,2590 357,2565 343,2530 341,2470 325,2450 320,2430 305,2428 298,2405 270,2385
C 397,2520 418,2520 423,2537 485,2533 487,2495 527,2495 527,2473 548,2475 550,2648 505,2650 498,2705 450,2678 430,2680 415,2688 397,2650 383,2555
C 547,2287 706,2290 706,2645 552,2650
D 706,2290 764,2290 770,2405 905,2412 905,2500 866,2508 863,2632 750,2635 748,2650 706,2645
C 505,2650 730,2652 733,2740 743,2745 745,2885 725,2892 533,2892 525,2845 540,2808 555,2798 560,2767 500,2705
C 750,2633 865,2633 865,2830 745,2832 743,2745 735,2740 730,2655 748,2652
E 866,2508 905,2502 1027,2502 1029,2718 1067,2714 1065,2780 905,2778 903,2838 866,2832
E 1028,2502 1146,2502 1146,2535 1182,2538 1184,2718 1029,2718
D 1184,2538 1333,2532 1333,2760 1187,2760
D 1333,2532 1435,2530 1445,2560 1440,2575 1465,2610 1463,2655 1487,2685 1487,2720 1475,2750 1333,2760
E 745,2835 903,2838 905,2925 700,2925 705,2905 745,2885
E 905,2778 1063,2780 1063,2925 905,2925
E 1067,2718 1184,2718 1187,2760 1220,2762 1222,2840 1213,2850 1215,2925 1065,2925
E 1220,2762 1342,2760 1342,2925 1213,2925 1213,2850 1222,2840
E 1342,2760 1475,2758 1487,2765 1487,2800 1493,2840 1475,2875 1450,2910 1450,2925 1342,2925
C 533,2892 707,2895 707,2925 530,2925
X 1300,740 1484,740 1482,888 1388,888 1386,825 1342,825 1342,770 1310,765`;
const layer = document.getElementById('counties');
counties.trim().split('\n').forEach(line => {
  const i = line.indexOf(' ');
  add(layer, 'path', { d: 'M' + line.slice(i + 1).replace(/ /g, 'L') + 'z', fill: FILL[line.slice(0, i)] });
});

// name, left, right, baseline, size, dot x, dot y, drawn over a county
const places = [
  ['Waterloo', 1844, 1935, 451, 21, 1941, 443], ['Ames', 1645, 1702, 566, 21, 1707, 559],
  ['Cedar Rapids', 1923, 2057, 580, 21, 2061, 573], ['IOWA', 1727, 1800, 596, 27],
  ['DES MOINES', 1563, 1705, 674, 23, 1710, 665], ['OMAHA', 1196, 1278, 754, 23, 1285, 746],
  ['Saint Joseph', 1350, 1477, 1112, 21, 1483, 1103], ['TOPEKA', 1235, 1326, 1281, 23, 1333, 1273],
  ['Columbia', 1837, 1935, 1304, 21, 1941, 1295], ['MISSOURI', 1834, 1965, 1351, 27],
  ['Quincy', 2032, 2103, 1073, 21, 2108, 1063], ['Dubuque', 2145, 2240, 451, 21, 2245, 443],
  ['Davenport', 2150, 2255, 690, 21, 2261, 682], ['Peoria', 2371, 2436, 889, 21, 2441, 881, 1],
  ['Bloomington', 2411, 2543, 943, 21, 2549, 935, 1], ['ILLINOIS', 2416, 2522, 1039, 27, 0, 0, 1],
  ['Urbana', 2614, 2686, 1029, 21, 2693, 1021, 1], ['Springfield', 2314, 2425, 1103, 21, 2431, 1098, 1],
  ['SAINT LOUIS', 2185, 2328, 1382, 23, 2334, 1374], ['Madison', 2387, 2472, 307, 21, 2481, 303],
  ['Grand Rapids', 3012, 3149, 335, 21, 3155, 329], ['Flint', 3464, 3508, 322, 21, 3514, 315],
  ['Lansing', 3274, 3351, 393, 21, 3357, 386], ['Kalamazoo', 3051, 3164, 502, 21, 3169, 495],
  ['Ann Arbor', 3398, 3502, 508, 21, 3507, 501], ['DETROIT', 3529, 3626, 493, 23, 3631, 485],
  ['Toledo', 3469, 3536, 659, 21, 3543, 651], ['CLEVELAND', 3737, 3870, 695, 23],
  ['Fort Wayne', 3132, 3245, 797, 21, 3251, 789], ['INDIANA', 3005, 3121, 979, 27],
  ['OHIO', 3662, 3732, 1004, 27], ['Muncie', 3126, 3199, 1009, 21, 3205, 1003],
  ['Columbus', 3530, 3636, 1065, 21, 3641, 1057], ['INDIANAPOLIS', 2897, 3059, 1112, 23, 3065, 1103],
  ['Dayton', 3346, 3417, 1114, 21, 3423, 1105], ['Bloomington', 2860, 2991, 1253, 21, 2997, 1245],
  ['CINCINNATI', 3228, 3359, 1269, 23, 3365, 1261], ['ary', 2819, 2846, 672, 21, 2851, 664]
];
const pg = document.getElementById('places');
places.forEach(([n, l, r, b, s, dx, dy, over]) => {
  const o = over ? ' over' : '';
  add(pg, 'text', { x: l, y: b, class: 'place' + o, 'font-size': s, textLength: r - l, lengthAdjust: 'spacingAndGlyphs' }, n);
  if (dx) add(pg, 'rect', { x: dx - 3, y: dy - 3, width: 6, height: 6, class: 'dot' + o });
});

// chart: seven-day average as [x, y] on the plot grid, days interpolated between
const avg = '108,858 118,840 124,860 135,858 150,850 165,842 180,823 195,818 203,803 215,803 230,795 250,788 270,790 285,792 295,782 315,765 325,750 342,747 355,738 385,735 395,750 405,748 430,758 437,752 455,762 468,755 485,770 500,785 520,797 540,808 560,818 580,829 600,832 640,827 680,829 710,832 730,824 760,825 790,815 825,819 845,812 870,797 895,795 910,800 950,790 990,796 1010,802 1018,785 1045,790 1060,808 1080,810 1110,800 1150,797 1185,795 1220,768 1250,735 1270,718 1275,728 1283,712 1298,705 1310,680 1325,635 1338,615 1345,570 1360,530 1375,475 1380,478 1388,437 1392,455 1400,438 1408,435 1414,470 1418,455 1425,480 1430,467 1440,495 1446,515 1452,483 1462,525 1478,572 1484,540 1492,555 1500,530 1508,525 1514,505 1523,545 1530,533 1538,550 1550,555 1560,570 1568,610 1578,622 1592,645 1601,628 1608,635 1618,672 1633,688 1643,682 1653,668 1673,655 1686,630 1705,625 1720,660 1733,660 1746,688 1758,690 1780,700 1798,735 1823,765 1858,770 1883,790 1913,799 1953,803 1980,815 2018,800 2028,806 2058,790 2113,770 2123,772 2130,760 2168,748 2188,738 2208,742 2233,757 2258,764 2303,762 2313,775 2338,785 2368,800 2408,802 2438,820 2468,835 2498,850 2568,857 2628,855 2678,848 2708,843 2758,828 2798,800 2833,783 2868,780 2908,770 2913,775 2943,762 2953,755 2973,777 3003,776 3013,763 3033,770 3068,783 3088,788 3120,772'.split(' ').map(p => p.split(',').map(Number));
const peaks = '346,690 308,720 320,720 405,703 357,705 415,717 458,735 384,714 170,783 866,763 1016,712 1094,762 1280,642 1302,627 1317,573 1323,576 1344,370 1355,430 1370,453 1382,393 1387,320 1392,547 1398,417 1403,484 1413,682 1419,310 1435,508 1440,562 1446,610 1451,462 1455,458 1461,630 1467,585 1472,597 1477,645 1483,424 1488,500 1498,487 1508,580 1519,617 1530,412 1562,697 1578,580 1615,770 1620,735 1636,612 1641,618 1646,628 1651,706 1656,712 1662,706 1668,618 1673,588 1678,577 1684,544 1689,660 1694,695 1699,710 1705,604 1716,690 1721,616 1737,740 1758,622 1763,682 1774,755 1832,733 1986,753 2040,768 2082,741 2034,835 2125,714 2130,727 2172,721 2204,721 2273,726 2315,738 2390,782 2825,753 2873,741 2910,733 2921,733 2947,724 3000,820 2985,742 3005,741'.split(' ').map(p => p.split(',').map(Number));
const STEP = 5.3175, X0 = 105;
const px = x => 1268 + x / 1.2278;
const py = y => 1360 + y / 3;
const set = {};
peaks.forEach(([x, y]) => { set[Math.round((x - X0 - 2.6) / STEP)] = y; });
function avgAt(x) {
  let i = 1;
  while (i < avg.length - 1 && avg[i][0] < x) i++;
  const [a, b] = [avg[i - 1], avg[i]];
  const t = Math.max(0, Math.min(1, (x - a[0]) / (b[0] - a[0])));
  return a[1] + (b[1] - a[1]) * t;
}
const plot = document.getElementById('plot');
let grid = '';
for (let v = 0; v <= 7; v++) {
  const y = 1646.7 - v * 30.47;
  grid += `M1340 ${y}H3813`;
  add(plot, 'text', { x: 1333, y: y + 8, class: 'axis' }, String(v * 500));
}
const week = [1.12, 1.16, 1.05, 1.08, .95, .8, .82];
let bars = '';
for (let d = 0; d < 568; d++) {
  const cx = X0 + 2.66 + d * STEP;
  const noise = 1 + .1 * Math.sin(d * 12.9898) + .05 * Math.sin(d * 4.1);
  const h = (860 - avgAt(cx)) * week[d % 7] * noise;
  const y = d in set ? set[d] : 860 - Math.max(0, h);
  bars += `M${px(cx).toFixed(1)} ${py(860)}V${py(y).toFixed(1)}`;
}
const start = Date.UTC(2020, 2, 17);
for (let k = 0; k < 64; k++) {
  const x = 1353.5 + k * 38.977;
  grid += `M${x} 1433V1659`;
  const t = new Date(start + k * 9 * 864e5);
  const s = `${t.getUTCMonth() + 1}/${t.getUTCDate()}/${t.getUTCFullYear()}`;
  add(plot, 'text', { class: 'axis', transform: `translate(${x + 6} 1673) rotate(-50)` }, s);
}
plot.insertBefore(add(plot, 'path', { d: grid, class: 'grid' }), plot.firstChild);
add(plot, 'path', { d: bars, class: 'bars' });
add(plot, 'path', { d: 'M' + avg.map(([x, y]) => px(x).toFixed(1) + ' ' + py(y).toFixed(1)).join('L'), class: 'avgline' });
```
